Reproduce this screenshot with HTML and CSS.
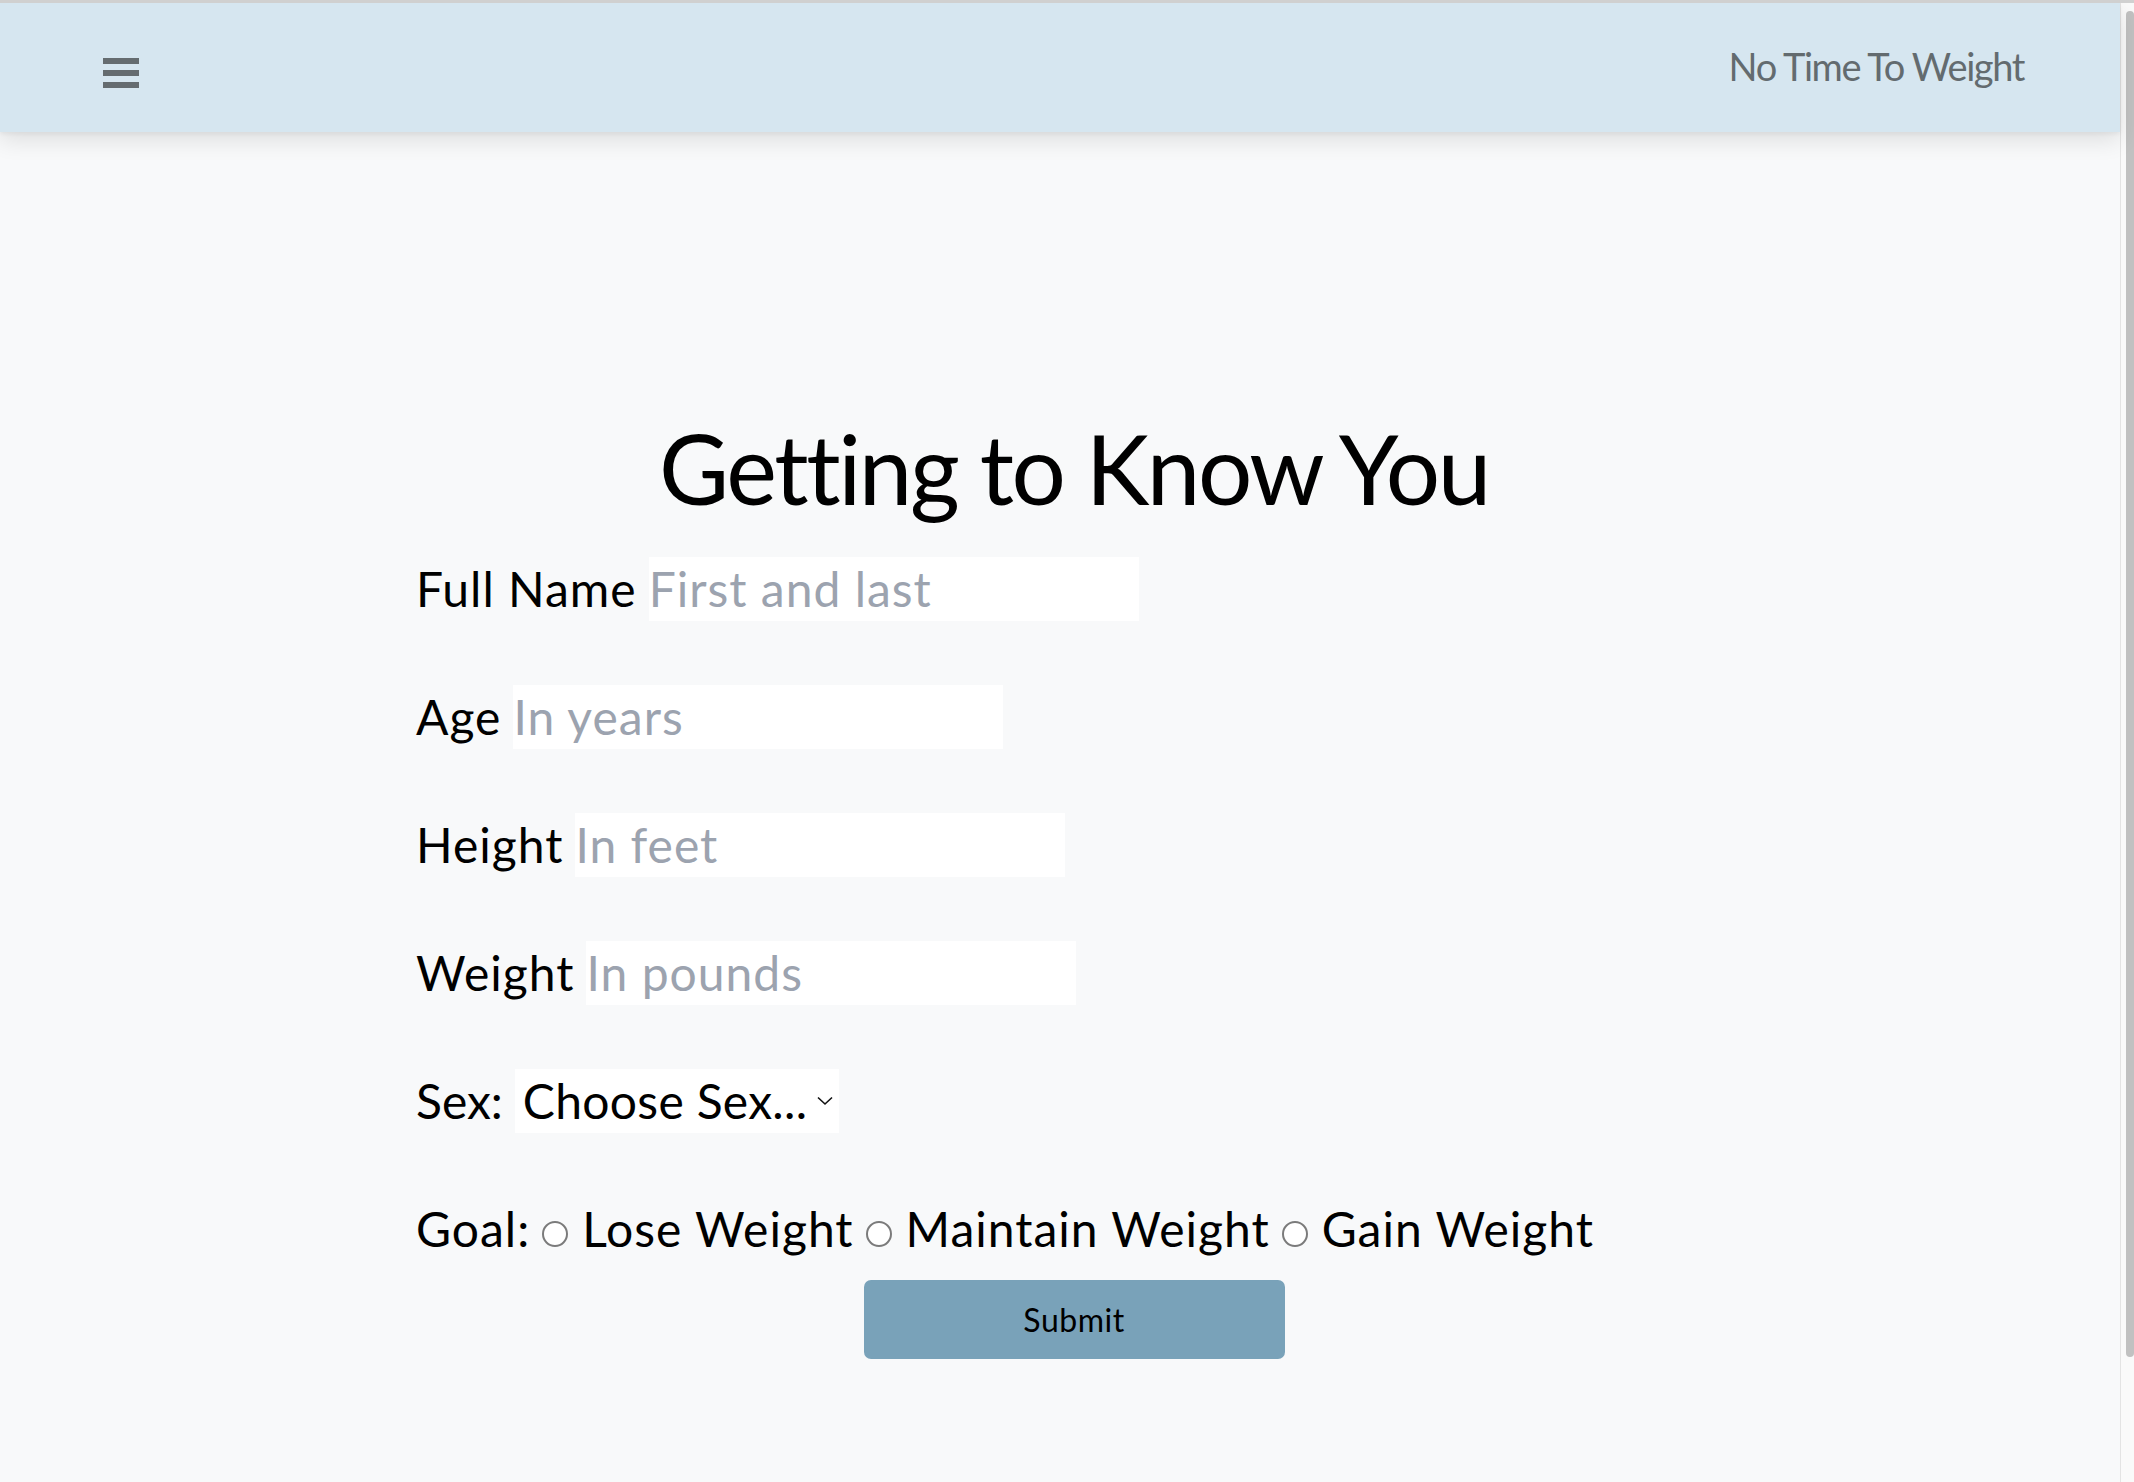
FILE: index.html
```html
<!DOCTYPE html>
<html lang="en">
<head>
<meta charset="utf-8">
<title>No Time To Weight</title>
<link rel="stylesheet" href="styles.css">
</head>
<body>
<div class="window">
  <div class="page">
    <header class="topbar">
      <button class="menu" type="button" aria-label="Menu">
        <svg width="36" height="30" viewBox="0 0 36 30" aria-hidden="true">
          <rect x="0" y="0" width="36" height="6" fill="#656c70"/>
          <rect x="0" y="12" width="36" height="6" fill="#656c70"/>
          <rect x="0" y="24" width="36" height="6" fill="#656c70"/>
        </svg>
      </button>
      <div class="brand">No Time To Weight</div>
    </header>
    <main class="main">
      <h1 class="title">Getting to Know You</h1>
      <form class="form">
        <div class="row"><label class="lbl" for="name">Full Name</label><input class="field" id="name" type="text" placeholder="First and last"></div>
        <div class="row"><label class="lbl" for="age">Age</label><input class="field" id="age" type="text" placeholder="In years"></div>
        <div class="row"><label class="lbl" for="height">Height</label><input class="field" id="height" type="text" placeholder="In feet"></div>
        <div class="row"><label class="lbl" for="weight">Weight</label><input class="field" id="weight" type="text" placeholder="In pounds"></div>
        <div class="row"><label class="lbl lbl-sex" for="sex">Sex:</label><span class="select-wrap"><select class="select" id="sex"><option>Choose Sex...</option><option>Male</option><option>Female</option></select><svg class="chev" width="16" height="10" viewBox="0 0 16 10" aria-hidden="true"><path d="M1 1.5 L8 8 L15 1.5" fill="none" stroke="#111" stroke-width="1.6"/></svg></span></div>
        <div class="row goal"><span class="lbl-goal">Goal:</span><input class="radio" type="radio" name="goal" id="lose"><label for="lose">Lose Weight</label><input class="radio" type="radio" name="goal" id="maintain"><label for="maintain">Maintain Weight</label><input class="radio" type="radio" name="goal" id="gain"><label for="gain">Gain Weight</label></div>
        <div class="actions"><button class="submit" type="submit">Submit</button></div>
      </form>
    </main>
  </div>
  <div class="scrollbar"><div class="thumb"></div></div>
</div>
</body>
</html>
```
FILE: styles.css
```css
html, body {
  height: 100%;
  margin: 0;
}

body {
  box-sizing: border-box;
  border-top: 3px solid #d0d0d0;
  background: #f8f9fa;
  font-family: "Lato", "Noto Sans", sans-serif;
  color: #000;
}

.window {
  display: flex;
  height: 100%;
}

.page {
  flex: 1;
  min-width: 0;
}

.topbar {
  position: relative;
  z-index: 1;
  height: 129px;
  box-sizing: border-box;
  display: flex;
  align-items: center;
  justify-content: space-between;
  padding: 0 96px 0 103px;
  background: #d6e6f0;
  box-shadow: 0 8px 22px rgba(0, 0, 0, 0.11), 0 2px 4px rgba(0, 0, 0, 0.05);
}

.menu {
  border: 0;
  padding: 0;
  margin: 10px 0 0;
  background: none;
  display: flex;
  cursor: pointer;
}

.brand {
  font-size: 38px;
  letter-spacing: -1.4px;
  color: #636b6f;
  margin-bottom: 4px;
}

.main {
  padding: 288px 0 0 28px;
}

.title {
  margin: 0;
  text-align: center;
  font-size: 96px;
  line-height: 96px;
  font-weight: 400;
  letter-spacing: -2.4px;
}

.form {
  width: 1316px;
  margin: 41px auto 0;
  font-size: 48px;
  letter-spacing: 1px;
}

.row {
  height: 64px;
  line-height: 64px;
  margin-bottom: 64px;
  white-space: nowrap;
}

.lbl {
  margin-right: 12px;
}

.lbl-sex {
  letter-spacing: 0;
}

.field {
  width: 490px;
  height: 64px;
  border: 0;
  padding: 0;
  margin: 0;
  background: #fff;
  font: inherit;
  letter-spacing: inherit;
  line-height: 64px;
  color: #000;
  vertical-align: baseline;
  outline: none;
}

.field::placeholder {
  color: #9ca3af;
}

.select-wrap {
  position: relative;
  display: inline-block;
  vertical-align: baseline;
}

.select {
  appearance: none;
  -webkit-appearance: none;
  width: 324px;
  height: 64px;
  border: 0;
  border-radius: 0;
  padding: 0 0 0 8px;
  margin: 0;
  background: #fff;
  font: inherit;
  letter-spacing: 0.3px;
  line-height: 64px;
  color: #000;
  outline: none;
}

.chev {
  position: absolute;
  left: 302px;
  top: 27px;
}

.goal {
  margin-bottom: 19px;
}

.radio {
  appearance: none;
  -webkit-appearance: none;
  box-sizing: border-box;
  width: 26px;
  height: 26px;
  margin: 0 14px 0 12px;
  border: 2px solid #7b7b7b;
  border-radius: 50%;
  background: #fff;
  vertical-align: baseline;
}

.actions {
  display: flex;
  justify-content: center;
}

.submit {
  width: 421px;
  height: 79px;
  border: 0;
  border-radius: 7px;
  background: #79a2b9;
  font-family: inherit;
  font-size: 32px;
  letter-spacing: 0.5px;
  color: #000;
  cursor: pointer;
}

.scrollbar {
  width: 13px;
  border-left: 1px solid #e4e4e4;
  background: #fafafa;
  box-sizing: content-box;
  padding-top: 8px;
}

.thumb {
  width: 8px;
  height: 1346px;
  margin-left: 5px;
  border-radius: 4px;
  background: #c1c1c1;
}
```
